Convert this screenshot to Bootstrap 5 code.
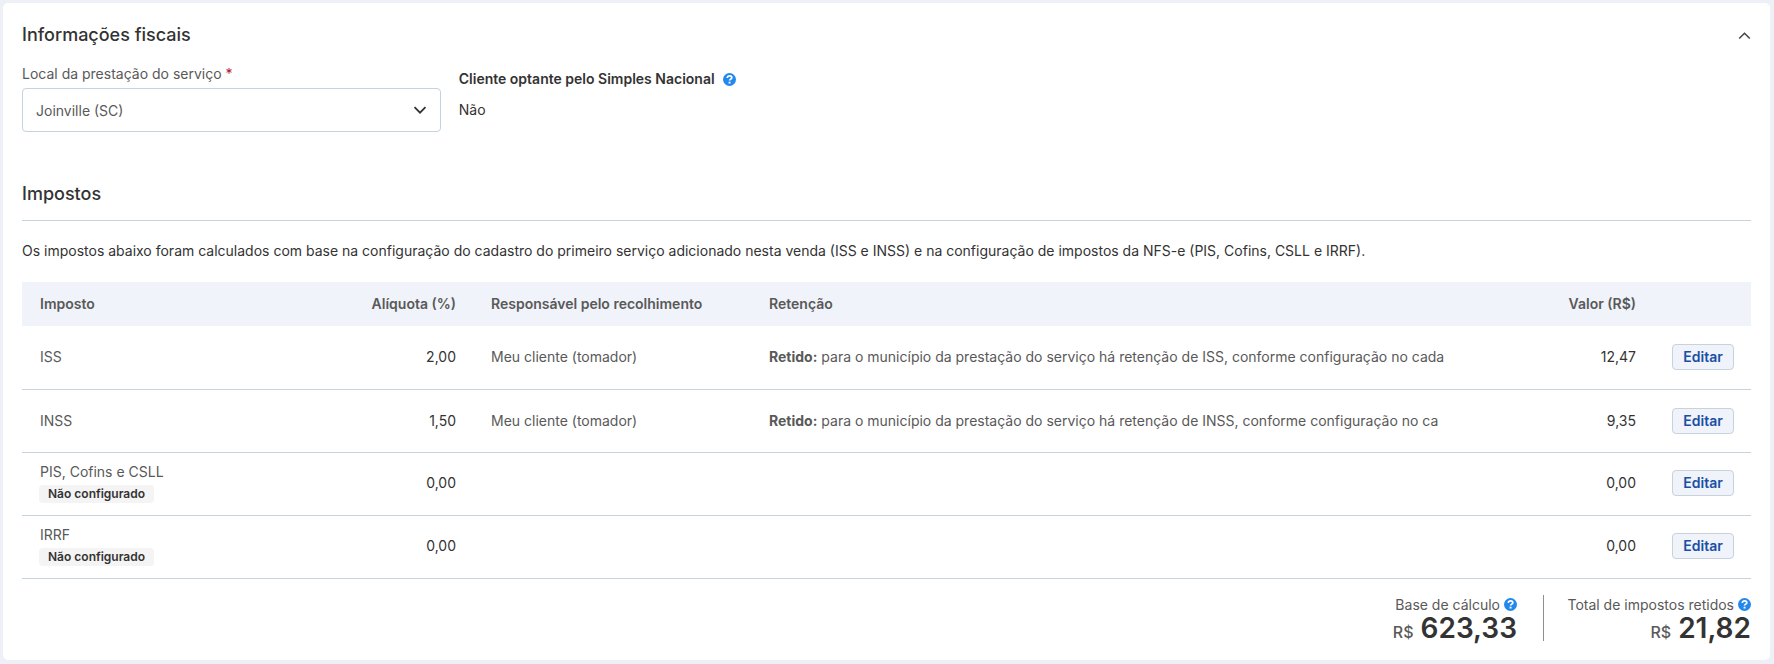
<!DOCTYPE html>
<html lang="pt-BR">
<head>
<meta charset="utf-8">
<meta name="viewport" content="width=device-width, initial-scale=1">
<title>Informações fiscais</title>
<link href="https://cdn.jsdelivr.net/npm/bootstrap@5.3.0/dist/css/bootstrap.min.css" rel="stylesheet">
<style>
  body { background: #edf0f7; color: #333; font-family: Inter, "Liberation Sans", sans-serif; font-size: 14px; line-height: 20px; }
  .fiscal-card { margin: 3px 4px 3px 3px; padding: 20px 19px 19px; border-radius: 5px; background: #fff; }
  .section-title { font-size: 18px; line-height: 24px; font-weight: 500; margin: 0; }
  .soft { color: #595959; }
  .fiscal-fields { --bs-gutter-x: 18px; margin-top: 9px; margin-bottom: 50px; }
  .required { color: #b3142e; }
  .form-select.city {
    height: 44px; padding: 0 40px 0 13px; border: 1px solid #c6d2de; border-radius: 4px; color: #595959; font-size: 14px;
    background-image: url("data:image/svg+xml,%3Csvg xmlns='http://www.w3.org/2000/svg' viewBox='0 0 14 14'%3E%3Cpath d='M1.5 4.200l5.500 5.500 5.500-5.500' fill='none' stroke='%23333' stroke-width='1.8'/%3E%3C/svg%3E");
    background-position: right 13px center; background-size: 14px 14px;
  }
  .simples-label { margin-top: 13px; margin-bottom: 11px; }
  .icon-btn { border: 0; background: none; padding: 0; display: inline-flex; }
  .taxes-title { padding-bottom: 14px; border-bottom: 1px solid #c6d2de; }
  .taxes-note { margin: 20px 0 21px; }
  .tax-table { table-layout: fixed; margin: 0; --bs-table-bg: transparent; }
  .tax-table > :not(caption) > * > * { padding: 0 17px 0 18px; border: 0; color: #595959; vertical-align: middle; }
  .tax-table > thead > tr > th { height: 44px; background: #f0f3f9; font-weight: 600; }
  .tax-table > tbody > tr > td { height: 63px; border-bottom: 1px solid #c6d2de; }
  .tax-table > tbody > tr.unset > td { padding-bottom: 2px; }
  .tax-table > tbody > tr > td.amount { color: #333; }
  .col-name { width: 301px; } .col-rate { width: 150px; } .col-who { width: 278px; } .col-value { width: 190px; } .col-action { width: 98px; }
  .clip { overflow: hidden; white-space: nowrap; }
  .status { display: block; width: fit-content; margin-top: 3px; margin-left: -1px; padding: 0 9px; border-radius: 4px; background: #f4f4f4; color: #333; font-size: 12px; line-height: 18px; font-weight: 600; }
  .btn-edit { width: 62px; height: 26px; padding: 0; border: 1px solid #c6d2de; border-radius: 4px; background: #f0f3f9; color: #1750a5; font-size: 14px; line-height: 22px; font-weight: 600; display: block; margin-left: auto; }
  .totals { margin-top: 16px; }
  .total-box + .total-box { min-width: 208px; margin-left: 26px; padding-left: 18px; border-left: 1px solid #8f8f8f; }
  .total-box .figure-value { font-size: 28px; line-height: 26px; font-weight: 600; color: #333; }
  .total-box .currency { font-size: 16px; line-height: 16px; font-weight: 500; }
</style>
</head>
<body>
<svg class="d-none" aria-hidden="true">
  <symbol id="help" viewBox="0 0 13 13">
    <circle cx="6.5" cy="6.5" r="6.5" fill="#2388ec"/>
    <path d="M4.300 5c0-1.300 1-2.100 2.300-2.100s2.200.7 2.200 1.800c0 1.500-2.200 1.400-2.200 2.900" fill="none" stroke="#fff" stroke-width="1.700"/>
    <rect x="5.600" y="8.700" width="1.900" height="1.800" fill="#fff"/>
  </symbol>
</svg>
<main class="fiscal-card">
  <div class="d-flex justify-content-between align-items-center">
    <h2 class="section-title">Informações fiscais</h2>
    <button type="button" class="icon-btn" aria-label="Recolher"><svg width="13" height="13" viewBox="0 0 13 13"><path d="M1.200 9.500l5.300-5.300 5.300 5.300" fill="none" stroke="#444" stroke-width="1.500"/></svg></button>
  </div>
  <div class="row fiscal-fields">
    <div class="col-3">
      <label for="city" class="soft d-block pt-2 mb-1">Local da prestação do serviço <span class="required">*</span></label>
      <select id="city" class="form-select city"><option>Joinville (SC)</option></select>
    </div>
    <div class="col-9">
      <div class="d-flex align-items-center gap-2 fw-semibold simples-label">Cliente optante pelo Simples Nacional
        <button type="button" class="icon-btn" aria-label="Ajuda"><svg width="13" height="13"><use href="#help"/></svg></button></div>
      <div>Não</div>
    </div>
  </div>
  <h2 class="section-title taxes-title">Impostos</h2>
  <p class="taxes-note">Os impostos abaixo foram calculados com base na configuração do cadastro do primeiro serviço adicionado nesta venda (ISS e INSS) e na configuração de impostos da NFS-e (PIS, Cofins, CSLL e IRRF).</p>
  <table class="table tax-table">
    <colgroup><col class="col-name"><col class="col-rate"><col class="col-who"><col><col class="col-value"><col class="col-action"></colgroup>
    <thead><tr><th>Imposto</th><th class="text-end">Alíquota (%)</th><th class="text-nowrap">Responsável pelo recolhimento</th><th>Retenção</th><th class="text-end">Valor (R$)</th><th></th></tr></thead>
    <tbody>
      <tr><td>ISS</td><td class="amount text-end">2,00</td><td>Meu cliente (tomador)</td><td><div class="clip"><b>Retido:</b> para o município da prestação do serviço há retenção de ISS, conforme configuração no cada</div></td><td class="amount text-end">12,47</td><td><button type="button" class="btn btn-edit">Editar</button></td></tr>
      <tr><td>INSS</td><td class="amount text-end">1,50</td><td>Meu cliente (tomador)</td><td><div class="clip"><b>Retido:</b> para o município da prestação do serviço há retenção de INSS, conforme configuração no ca</div></td><td class="amount text-end">9,35</td><td><button type="button" class="btn btn-edit">Editar</button></td></tr>
      <tr class="unset"><td>PIS, Cofins e CSLL<span class="status">Não configurado</span></td><td class="amount text-end">0,00</td><td></td><td></td><td class="amount text-end">0,00</td><td><button type="button" class="btn btn-edit">Editar</button></td></tr>
      <tr class="unset"><td>IRRF<span class="status">Não configurado</span></td><td class="amount text-end">0,00</td><td></td><td></td><td class="amount text-end">0,00</td><td><button type="button" class="btn btn-edit">Editar</button></td></tr>
    </tbody>
  </table>
  <div class="totals d-flex justify-content-end text-end soft">
    <div class="total-box">
      <div class="d-flex align-items-center justify-content-end gap-1">Base de cálculo <button type="button" class="icon-btn" aria-label="Ajuda"><svg width="13" height="13"><use href="#help"/></svg></button></div>
      <div class="figure-value"><span class="currency soft">R$</span> 623,33</div>
    </div>
    <div class="total-box">
      <div class="d-flex align-items-center justify-content-end gap-1">Total de impostos retidos <button type="button" class="icon-btn" aria-label="Ajuda"><svg width="13" height="13"><use href="#help"/></svg></button></div>
      <div class="figure-value"><span class="currency soft">R$</span> 21,82</div>
    </div>
  </div>
</main>
<script src="https://cdn.jsdelivr.net/npm/bootstrap@5.3.0/dist/js/bootstrap.bundle.min.js"></script>
</body>
</html>
